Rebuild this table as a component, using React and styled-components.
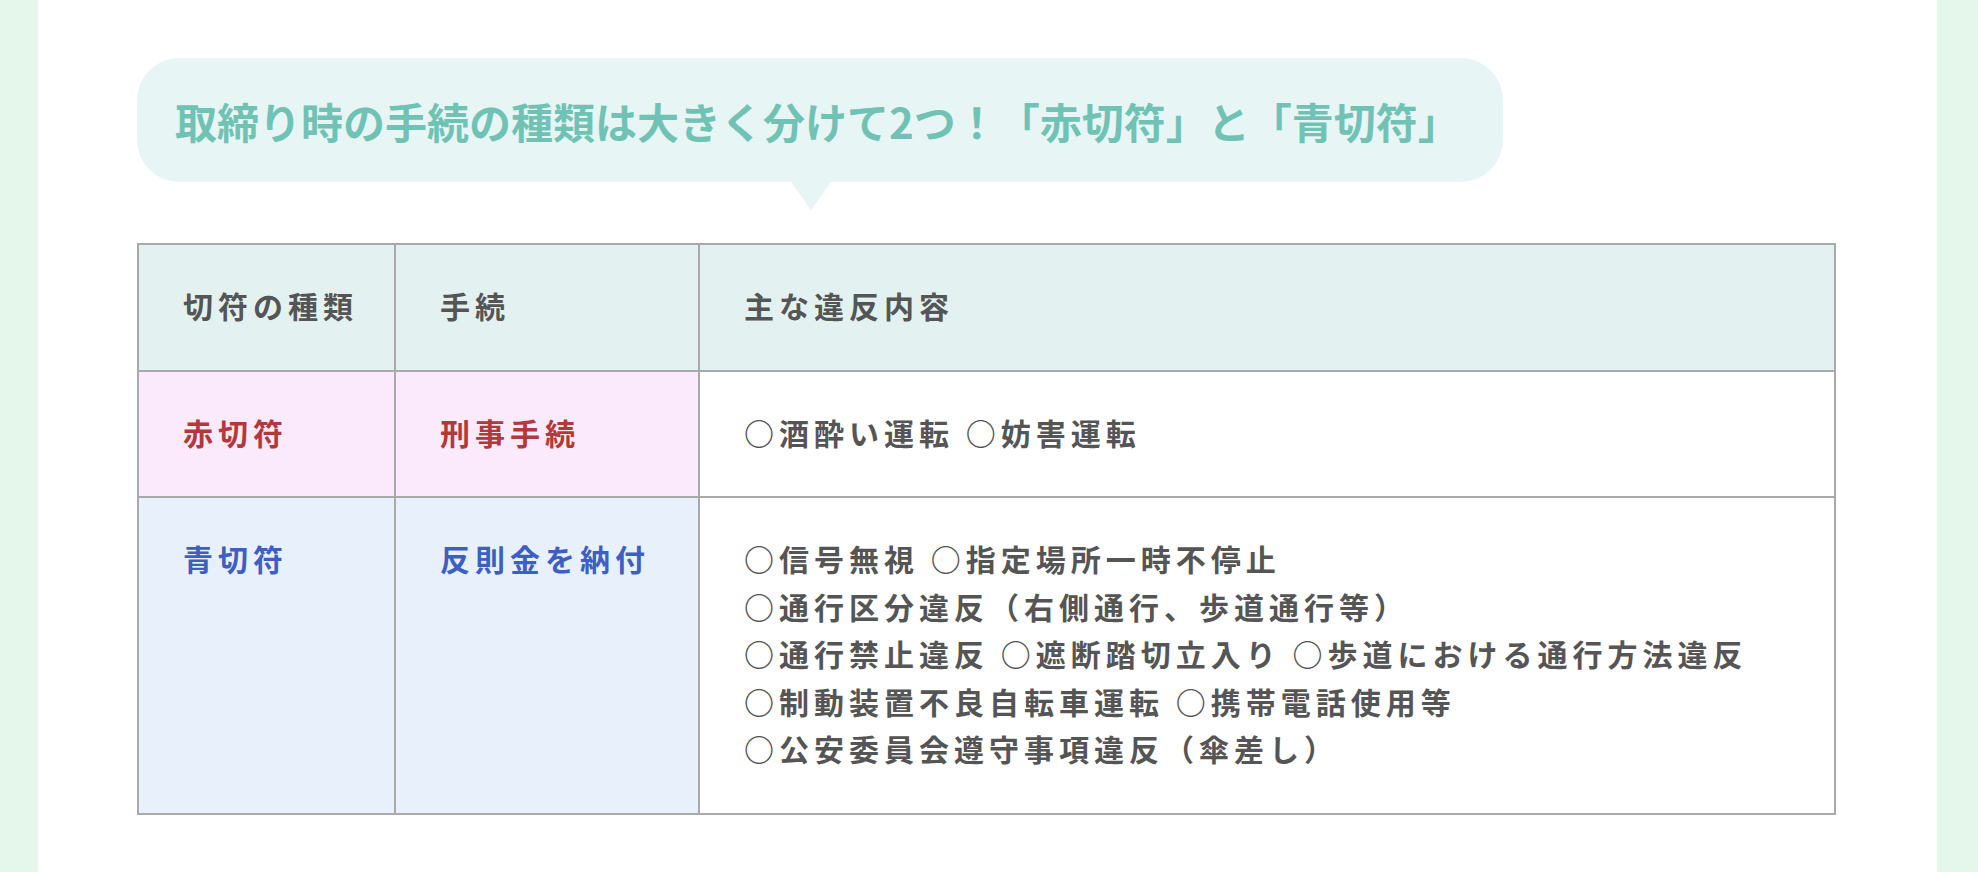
import React from "react";
import styled, { createGlobalStyle } from "styled-components";

const GlobalStyle = createGlobalStyle`
  html, body {
    margin: 0;
    padding: 0;
    background: #ffffff;
  }
  body {
    font-family: "Noto Sans CJK JP", "Noto Sans", sans-serif;
  }
`;

const Page = styled.div`
  display: flex;
  width: 1978px;
  height: 872px;
  overflow: hidden;
`;

const SideBand = styled.div`
  flex: 0 0 ${(p) => p.width}px;
  background: #e5f6ea;
`;

const Main = styled.main`
  flex: 1;
  background: #ffffff;
  padding: 58px 0 0 99px;
  display: flex;
  flex-direction: column;
  align-items: flex-start;
`;

const Bubble = styled.div`
  position: relative;
  display: flex;
  align-items: center;
  height: 124px;
  box-sizing: border-box;
  padding: 0 43px 0 38px;
  border-radius: 42px;
  background: #e8f5f5;
  color: #70c3b4;
  font-size: 42px;
  font-weight: 700;
  letter-spacing: 0px;
  white-space: nowrap;

  &::after {
    content: "";
    position: absolute;
    left: 654px;
    bottom: -28px;
    border-left: 20px solid transparent;
    border-right: 20px solid transparent;
    border-top: 28px solid #e8f5f5;
  }
`;

const Table = styled.table`
  margin-top: 61px;
  width: 1699px;
  border-collapse: collapse;
  table-layout: fixed;
  border: 2px solid #a9a9a9;
`;

const Cell = styled.td`
  border: 2px solid #a9a9a9;
  padding: 37px 0 40px 44px;
  vertical-align: top;
  font-size: 30px;
  line-height: 47.5px;
  letter-spacing: 5px;
  white-space: nowrap;
  font-weight: 700;
  color: ${(p) => p.$color || "#555555"};
  background: ${(p) => p.$bg || "#ffffff"};
`;

const HeadCell = styled(Cell).attrs({ as: "th" })`
  text-align: left;
  background: #e3f2f1;
`;

const Line = styled.div`
  white-space: nowrap;
`;

const rows = [
  {
    kind: "赤切符",
    proc: "刑事手続",
    color: "#b3383b",
    bg: "#fbeafb",
    items: ["○酒酔い運転 ○妨害運転"],
  },
  {
    kind: "青切符",
    proc: "反則金を納付",
    color: "#3d5fc4",
    bg: "#e8f0fc",
    items: [
      "○信号無視 ○指定場所一時不停止",
      "○通行区分違反（右側通行、歩道通行等）",
      "○通行禁止違反 ○遮断踏切立入り ○歩道における通行方法違反",
      "○制動装置不良自転車運転 ○携帯電話使用等",
      "○公安委員会遵守事項違反（傘差し）",
    ],
  },
];

export default function App() {
  return (
    <>
      <GlobalStyle />
      <Page>
        <SideBand width={38} />
        <Main>
          <Bubble>取締り時の手続の種類は大きく分けて2つ！「赤切符」と「青切符」</Bubble>
          <Table>
            <colgroup>
              <col style={{ width: 257 }} />
              <col style={{ width: 304 }} />
              <col />
            </colgroup>
            <thead>
              <tr>
                <HeadCell>切符の種類</HeadCell>
                <HeadCell>手続</HeadCell>
                <HeadCell>主な違反内容</HeadCell>
              </tr>
            </thead>
            <tbody>
              {rows.map((r) => (
                <tr key={r.kind}>
                  <Cell $color={r.color} $bg={r.bg}>
                    {r.kind}
                  </Cell>
                  <Cell $color={r.color} $bg={r.bg}>
                    {r.proc}
                  </Cell>
                  <Cell>
                    {r.items.map((t) => (
                      <Line key={t}>{t}</Line>
                    ))}
                  </Cell>
                </tr>
              ))}
            </tbody>
          </Table>
        </Main>
        <SideBand width={41} />
      </Page>
    </>
  );
}
